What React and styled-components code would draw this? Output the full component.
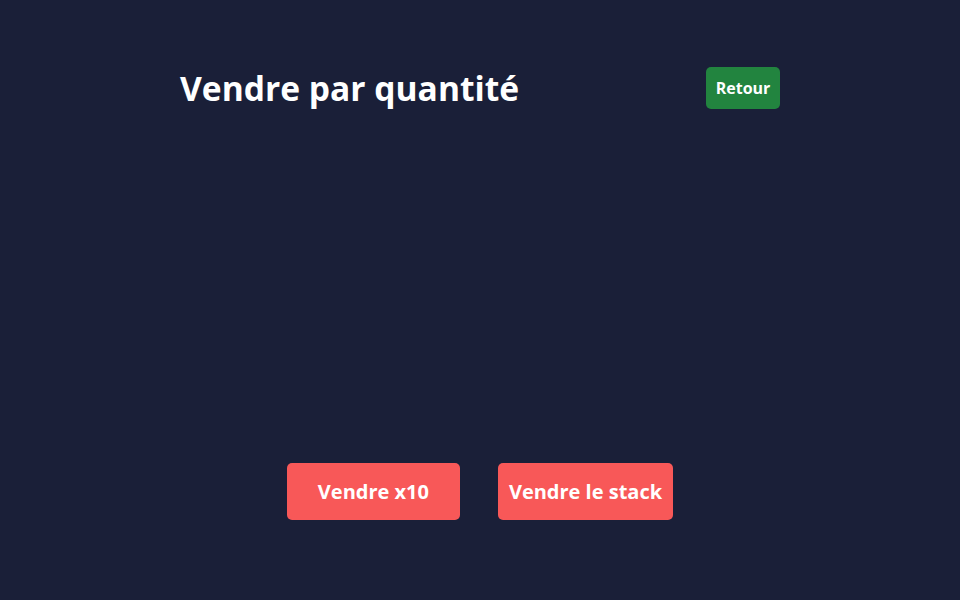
import React from "react";
import styled, { createGlobalStyle } from "styled-components";

const Global = createGlobalStyle`
  html, body { margin: 0; padding: 0; background: #1a1f38; }
  body { font-family: "Open Sans", "Noto Sans", sans-serif; }
`;

const Page = styled.div`
  width: 960px;
  height: 600px;
  box-sizing: border-box;
  display: flex;
  flex-direction: column;
  align-items: center;
  padding-top: 67px;
`;

const Header = styled.div`
  width: 600px;
  display: flex;
  align-items: center;
  justify-content: space-between;
`;

const Title = styled.h1`
  margin: 0;
  color: #ffffff;
  font-size: 33.6px;
  font-weight: 700;
  line-height: 42px;
`;

const BackButton = styled.button`
  height: 42px;
  width: 74px;
  padding: 0;
  border: none;
  border-radius: 5px;
  background: #22843f;
  color: #fff;
  font-family: inherit;
  font-weight: 700;
  font-size: 16px;
`;

const Actions = styled.div`
  margin-top: 354px;
  display: flex;
  gap: 38px;
`;

const SellButton = styled.button`
  height: 57px;
  min-width: ${(p) => p.$w}px;
  padding: 0 11px;
  border: none;
  border-radius: 5px;
  background: #f85858;
  color: #fff;
  font-family: inherit;
  font-weight: 700;
  font-size: 20px;
`;

export default function App() {
  return (
    <>
      <Global />
      <Page>
        <Header>
          <Title>Vendre par quantité</Title>
          <BackButton>Retour</BackButton>
        </Header>
        <Actions>
          <SellButton $w={173}>Vendre x10</SellButton>
          <SellButton $w={175}>Vendre le stack</SellButton>
        </Actions>
      </Page>
    </>
  );
}
